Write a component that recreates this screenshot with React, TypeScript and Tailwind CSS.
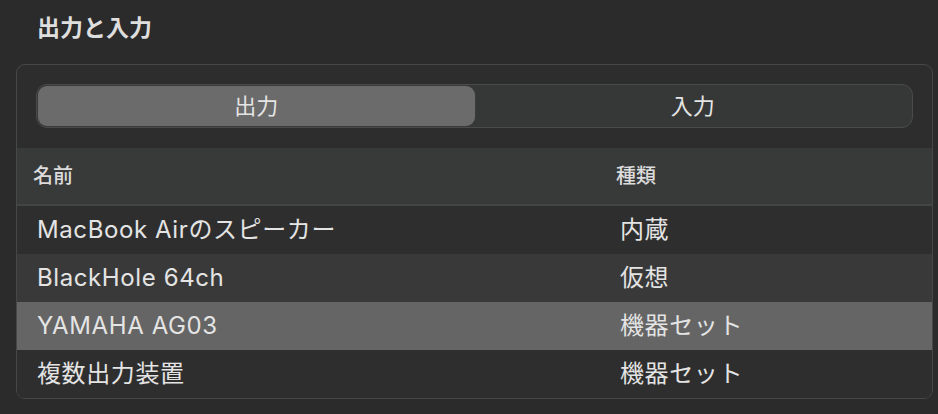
import { useState } from 'react';

const font = { fontFamily: '"Inter", "Noto Sans CJK JP", sans-serif' };

const devices = [
  { name: 'MacBook Airのスピーカー', kind: '内蔵' },
  { name: 'BlackHole 64ch', kind: '仮想' },
  { name: 'YAMAHA AG03', kind: '機器セット' },
  { name: '複数出力装置', kind: '機器セット' },
];

const rowBg = ['bg-[#2e2e2e]', 'bg-[#393939]', 'bg-[#656565]', 'bg-[#2e2e2e]'];

export default function App() {
  const [tab, setTab] = useState<'out' | 'in'>('out');

  return (
    <div className="w-[938px] h-[414px] bg-[#2b2b2b] text-[#e4e4e4] overflow-hidden" style={font}>
      <div className="h-[64px] pl-[37px] pt-[13px]">
        <h1 className="text-[23px] font-semibold leading-[30px] text-[#dedede]">出力と入力</h1>
      </div>

      <div className="ml-[16px] w-[917px] h-[335px] rounded-[9px] border border-[#474747] bg-[#2d2d2d] overflow-hidden">
        <div className="px-[19px] pt-[19px] pb-[20px]">
          <div className="flex h-[44px] p-px rounded-[11px] border border-[#4a4a4a] bg-[#363838]">
            <button
              onClick={() => setTab('out')}
              className={`flex-1 rounded-[9px] text-[22px] leading-none ${
                tab === 'out' ? 'bg-[#6b6b6b] shadow-[0_0_0_1px_#3a3a3a]' : ''
              }`}
            >
              出力
            </button>
            <button
              onClick={() => setTab('in')}
              className={`flex-1 rounded-[9px] text-[22px] leading-none ${
                tab === 'in' ? 'bg-[#6b6b6b] shadow-[0_0_0_1px_#3a3a3a]' : ''
              }`}
            >
              入力
            </button>
          </div>
        </div>

        <div className="flex items-center h-[58px] bg-[#383a3a] border-b-2 border-[#434545] text-[20px] font-medium text-[#dcdcdc]">
          <div className="w-[599px] pl-[16px]">名前</div>
          <div>種類</div>
        </div>

        {devices.map((d, i) => (
          <div key={d.name} className={`flex items-center h-[48px] text-[24px] tracking-[0.6px] ${rowBg[i]}`}>
            <div className="w-[603px] pl-[20px] whitespace-nowrap">{d.name}</div>
            <div className="whitespace-nowrap">{d.kind}</div>
          </div>
        ))}
      </div>
    </div>
  );
}
